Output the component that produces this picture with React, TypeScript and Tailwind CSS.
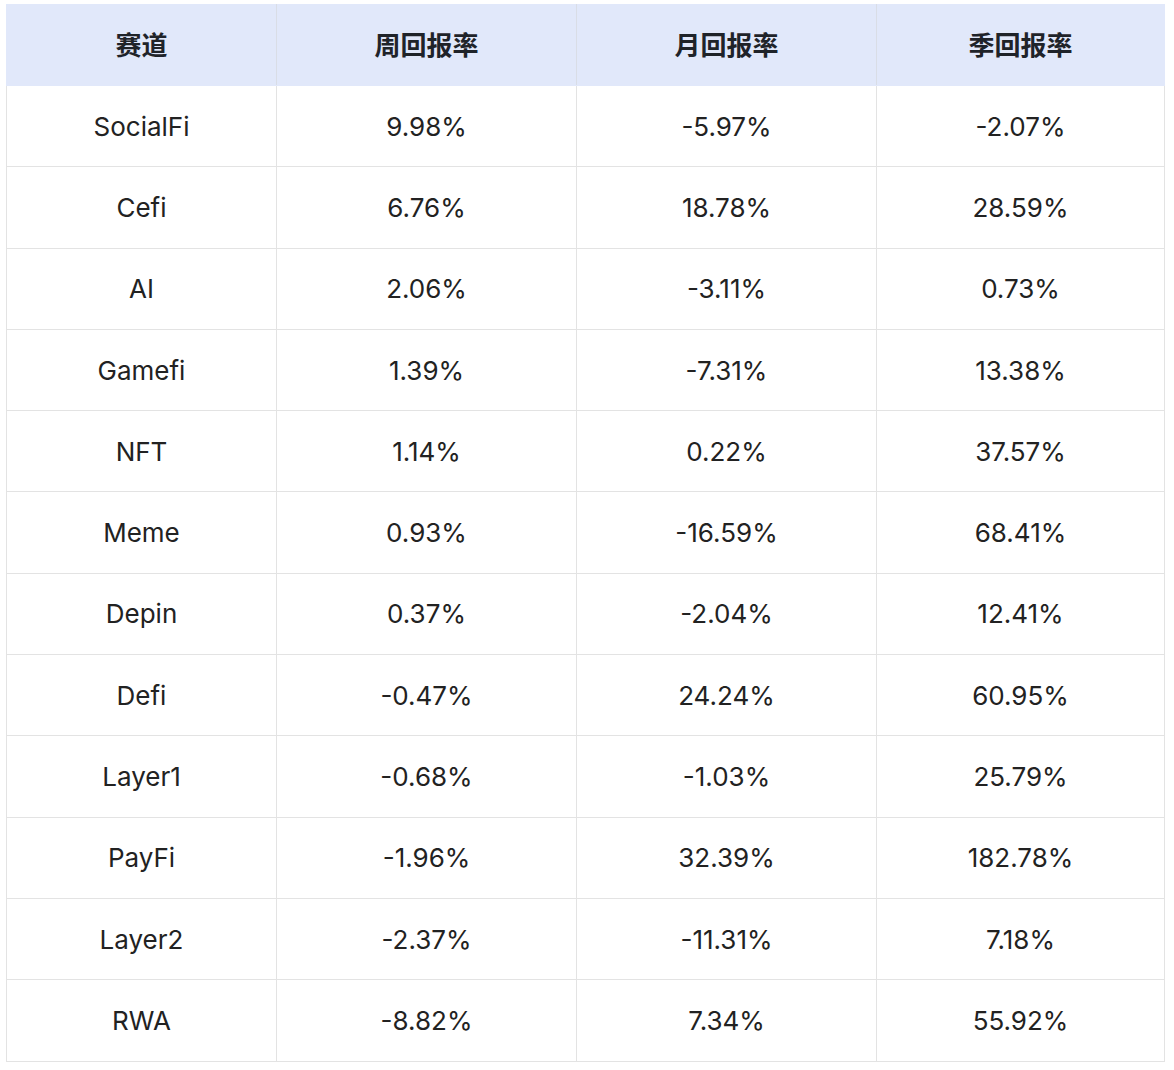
const rows: [string, string, string, string][] = [
  ["SocialFi", "9.98%", "-5.97%", "-2.07%"],
  ["Cefi", "6.76%", "18.78%", "28.59%"],
  ["AI", "2.06%", "-3.11%", "0.73%"],
  ["Gamefi", "1.39%", "-7.31%", "13.38%"],
  ["NFT", "1.14%", "0.22%", "37.57%"],
  ["Meme", "0.93%", "-16.59%", "68.41%"],
  ["Depin", "0.37%", "-2.04%", "12.41%"],
  ["Defi", "-0.47%", "24.24%", "60.95%"],
  ["Layer1", "-0.68%", "-1.03%", "25.79%"],
  ["PayFi", "-1.96%", "32.39%", "182.78%"],
  ["Layer2", "-2.37%", "-11.31%", "7.18%"],
  ["RWA", "-8.82%", "7.34%", "55.92%"],
];

const headers = ["赛道", "周回报率", "月回报率", "季回报率"];

export default function App() {
  return (
    <div className="min-h-[1070px] bg-white pl-[6px] pr-[9px] pt-[4px] font-['Inter','Noto_Sans_CJK_SC',sans-serif] text-[26px] text-[#1f2329]">
      <table className="w-full table-fixed border-collapse">
        <colgroup>
          <col className="w-[270px]" />
          <col className="w-[300px]" />
          <col className="w-[300px]" />
          <col />
        </colgroup>
        <thead>
          <tr className="h-[81px] bg-[#e1e8fa]">
            {headers.map((h) => (
              <th
                key={h}
                className="border border-[#e1e8fa] border-r-[#d9dde6] text-center font-bold last:border-r-[#e1e8fa]"
              >
                {h}
              </th>
            ))}
          </tr>
        </thead>
        <tbody>
          {rows.map((r) => (
            <tr key={r[0]} className="h-[81.3px]">
              {r.map((c, i) => (
                <td
                  key={i}
                  className="border border-[#e3e3e3] text-center font-normal text-[#222222]"
                >
                  {c}
                </td>
              ))}
            </tr>
          ))}
        </tbody>
      </table>
    </div>
  );
}
